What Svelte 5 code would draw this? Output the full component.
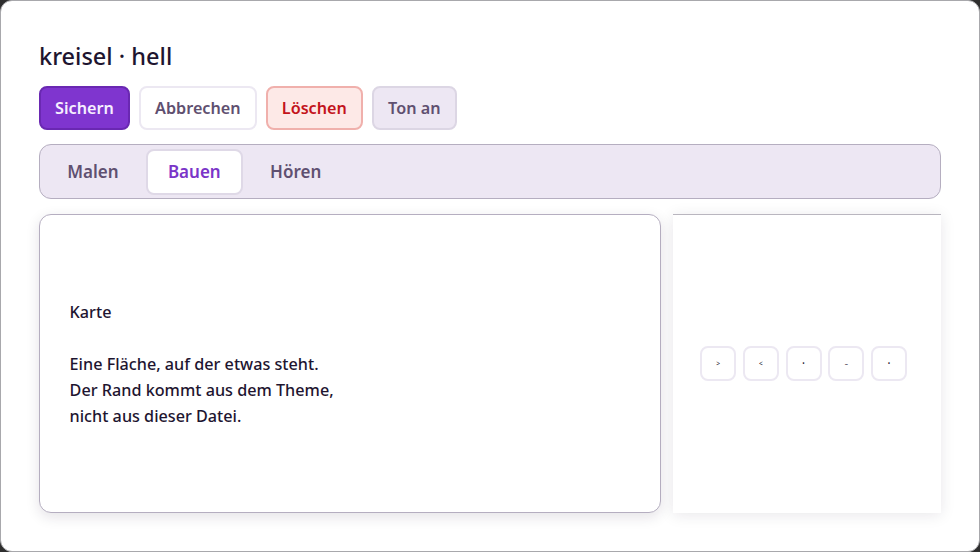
<script>
	const buttons = [
		{ label: 'Sichern', kind: 'primary' },
		{ label: 'Abbrechen', kind: 'plain' },
		{ label: 'Löschen', kind: 'danger' },
		{ label: 'Ton an', kind: 'toggle' }
	];
	const tabs = ['Malen', 'Bauen', 'Hören'];
	const keys = ['>', '<', '•', '–', '•'];
	let active = $state('Bauen');
</script>

<div class="window">
	<h1>kreisel · hell</h1>

	<div class="actions">
		{#each buttons as b}
			<button class="btn {b.kind}">{b.label}</button>
		{/each}
	</div>

	<nav class="tabs">
		{#each tabs as t}
			<button class="tab" class:active={t === active} onclick={() => (active = t)}>{t}</button>
		{/each}
	</nav>

	<div class="main">
		<section class="card">
			<p>Karte</p>
			<p>Eine Fläche, auf der etwas steht.<br />Der Rand kommt aus dem Theme,<br />nicht aus dieser Datei.</p>
		</section>
		<aside class="side">
			{#each keys as k}
				<button class="key">{k}</button>
			{/each}
		</aside>
	</div>
</div>

<style>
	:global(body) {
		background: #2e2e2e;
	}
	.window {
		box-sizing: border-box;
		width: 980px;
		height: 552px;
		padding: 39px 38px 38px;
		display: flex;
		flex-direction: column;
		background: #fff;
		border: 1px solid #a8a8ac;
		border-radius: 12px;
		font-family: "Noto Sans", sans-serif;
		color: #1e1530;
	}
	h1 {
		margin: 0 0 14px;
		font-size: 23.5px;
		line-height: 32px;
		font-weight: 500;
	}
	.actions {
		display: flex;
		gap: 9px;
		margin-bottom: 14px;
	}
	button {
		font-family: inherit;
	}
	.btn {
		box-sizing: border-box;
		height: 44px;
		padding: 0 14.1px;
		border-radius: 8px;
		border: 2px solid;
		font-size: 16.2px;
		font-weight: 600;
	}
	.primary {
		background: #7f35cf;
		border-color: #6a28b2;
		color: #f6efff;
	}
	.plain {
		background: #fff;
		border-color: #ece8f2;
		color: #5f5070;
	}
	.danger {
		background: #fde9e7;
		border-color: #f0b0ac;
		color: #c3131c;
	}
	.toggle {
		background: #ede7f3;
		border-color: #dcd6e4;
		color: #5f5070;
	}
	.tabs {
		box-sizing: border-box;
		height: 55px;
		display: flex;
		align-items: center;
		gap: 5px;
		padding: 0 5px;
		margin-bottom: 15px;
		background: #ede7f3;
		border: 1px solid #b5aec0;
		border-radius: 12px;
	}
	.tab {
		box-sizing: border-box;
		height: 46px;
		padding: 0 20.2px;
		background: none;
		border: 2px solid transparent;
		border-radius: 8px;
		font-size: 17px;
		font-weight: 600;
		color: #5f5070;
	}
	.tab.active {
		background: #fff;
		border-color: #dfd9e7;
		color: #7a35c8;
	}
	.main {
		flex: 1;
		display: flex;
		gap: 12px;
		min-height: 0;
	}
	.card {
		box-sizing: border-box;
		width: 622px;
		display: flex;
		flex-direction: column;
		justify-content: center;
		padding: 0 29.6px;
		background: #fff;
		border: 1px solid #b5aec0;
		border-radius: 12px;
		box-shadow: 0 4px 14px rgba(30, 20, 50, 0.12);
		font-size: 16.2px;
		line-height: 26px;
		font-weight: 500;
	}
	.card p {
		margin: 0 0 26px;
	}
	.card p:last-child {
		margin-bottom: 0;
	}
	.side {
		box-sizing: border-box;
		width: 268px;
		display: flex;
		justify-content: center;
		align-items: center;
		gap: 6.75px;
		padding: 0 7px 2px 0;
		background: #fff;
		border-top: 1px solid #b9b6bf;
		box-shadow: 0 2px 14px rgba(30, 20, 50, 0.1);
	}
	.key {
		box-sizing: border-box;
		width: 36px;
		height: 35px;
		padding: 0;
		background: #fff;
		border: 2px solid #ece8f2;
		border-radius: 8px;
		font-size: 6.5px;
		color: #1e1530;
	}
</style>
